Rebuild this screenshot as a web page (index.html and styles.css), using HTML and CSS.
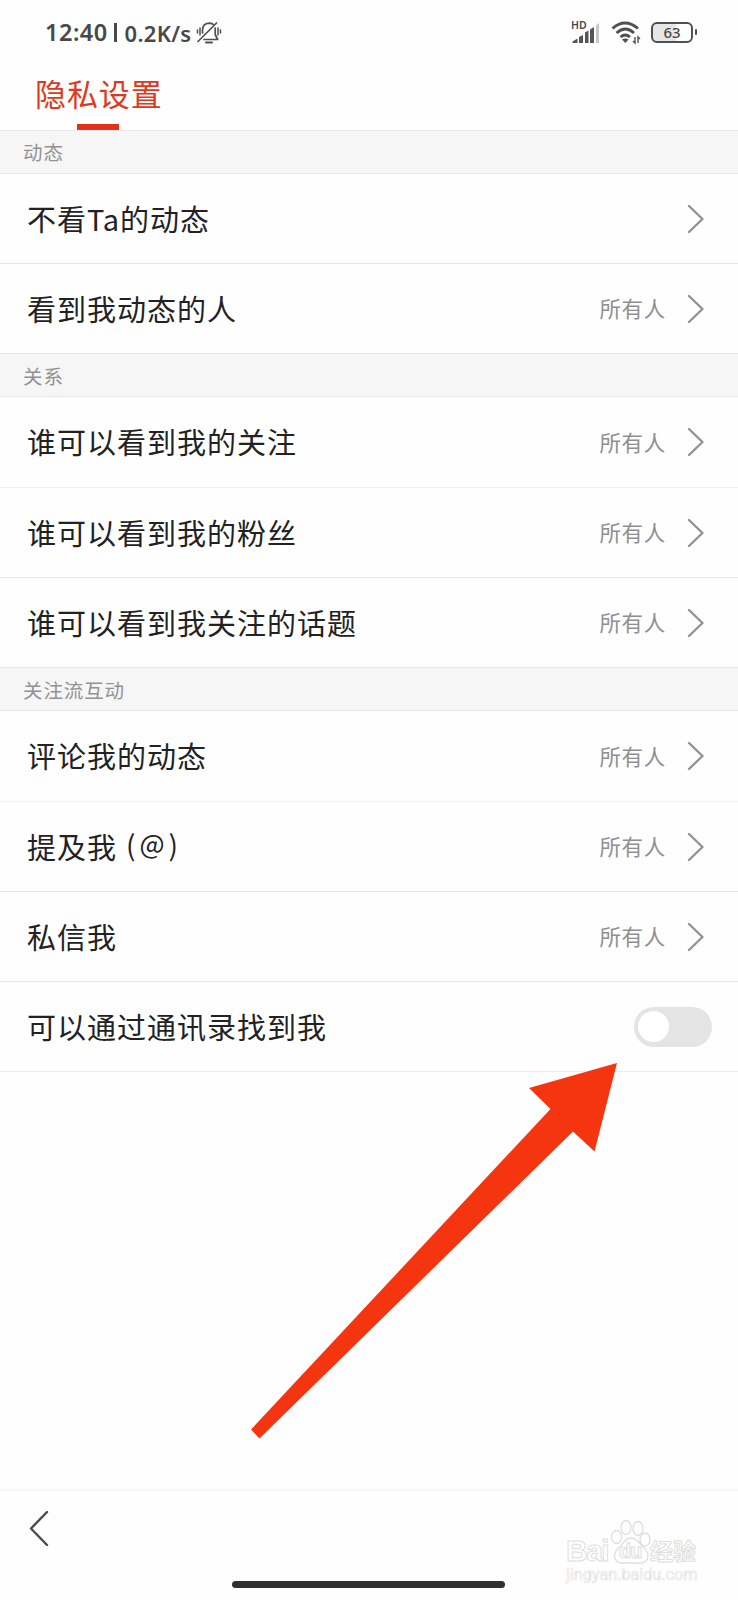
FILE: index.html
```html
<!DOCTYPE html>
<html lang="zh-CN">
<head>
<meta charset="utf-8">
<title>隐私设置</title>
<link rel="stylesheet" href="styles.css">
</head>
<body>
<svg class="defs" width="0" height="0"><symbol id="chevron" viewBox="0 0 18 30"><path d="M2 2 15.500 15 2 28" fill="none" stroke="#929292" stroke-width="2.400" stroke-linecap="round" stroke-linejoin="round"/></symbol></svg>
<div class="screen">
  <div class="status">
    <span class="clock">12:40</span><span class="divider"></span><span class="speed">0.2K/s</span>
    <svg class="bell" width="26" height="24" viewBox="0 0 26 24" fill="none" stroke="#505050" stroke-width="1.700" stroke-linecap="round" stroke-linejoin="round">
      <path d="M2 20.500 20.500 2M6.500 12V9.500C6.500 5 9 2.500 13 2.200c1.500 0 2.800.4 4 1.100M19.200 7v6.500l2.500 5H8"/><path d="M10 21.500h6" stroke-width="2"/><path d="M4 7v7M1.500 9v3M22 7v7M24.500 9v3" stroke-width="1.500"/>
    </svg>
    <div class="indicators">
      <div class="cell"><span class="hd">HD</span>
        <svg width="30" height="24" viewBox="0 0 30 24"><path d="M1.500 22v-1.500l5-3v4.500zM8 22v-6l4-2v8zM14 22V11.500l3.500-2V22zM19 22V8.500L23 6v16z" fill="#555"/><path d="M25 22V4.500L28 2v20z" fill="#c6c6c6"/></svg>
      </div>
      <svg class="wifi" width="32" height="26" viewBox="0 0 32 26" fill="none" stroke="#505050" stroke-width="2.800"><path d="M2.500 8.500Q15 -2.500 28 8.500M6.500 13q9-8 17.500 0M10.500 17q4.700-4 9.500 0"/><path d="m12 19.500 3.300 3.500 3.300-3.500q-3.300-2-6.600 0z" fill="#505050" stroke="none"/><path d="M25 17v6l-2-2M28 23v-6l2 2" stroke-width="1.400"/></svg>
      <div class="battery"><span>63</span></div>
    </div>
  </div>
  <header class="header"><h1 class="title">隐私设置</h1></header>
  <main>
    <h2 class="section raised">动态</h2>
    <div class="row"><span class="label">不看<span class="latin">Ta</span>的动态</span><svg class="chev"><use href="#chevron"/></svg></div>
    <div class="row"><span class="label">看到我动态的人</span><span class="value">所有人</span><svg class="chev"><use href="#chevron"/></svg></div>
    <h2 class="section">关系</h2>
    <div class="row first"><span class="label">谁可以看到我的关注</span><span class="value">所有人</span><svg class="chev"><use href="#chevron"/></svg></div>
    <div class="row"><span class="label">谁可以看到我的粉丝</span><span class="value">所有人</span><svg class="chev"><use href="#chevron"/></svg></div>
    <div class="row"><span class="label">谁可以看到我关注的话题</span><span class="value">所有人</span><svg class="chev"><use href="#chevron"/></svg></div>
    <h2 class="section">关注流互动</h2>
    <div class="row first"><span class="label">评论我的动态</span><span class="value">所有人</span><svg class="chev"><use href="#chevron"/></svg></div>
    <div class="row"><span class="label">提及我<span class="mention"><span>(</span><span class="at">@</span><span>)</span></span></span><span class="value">所有人</span><svg class="chev"><use href="#chevron"/></svg></div>
    <div class="row"><span class="label">私信我</span><span class="value">所有人</span><svg class="chev"><use href="#chevron"/></svg></div>
    <div class="row last"><span class="label">可以通过通讯录找到我</span><span class="switch"></span></div>
  </main>
  <footer class="footer">
    <svg class="back" width="22" height="40" viewBox="0 0 22 40"><path d="M19 4 3 20.500l16 16.500" fill="none" stroke="#4a4a4a" stroke-width="2.400" stroke-linecap="round" stroke-linejoin="round"/></svg>
    <div class="home"></div>
  </footer>
  <svg class="arrow" width="370" height="378" viewBox="249 1062 370 378"><path d="M617 1063 594.500 1151.500 573 1131.500 259.500 1438.500 251 1429.500 550.500 1109 529 1088z" fill="#f5350f"/></svg>
  <div class="mark">
    <span class="bai">Bai</span>
    <svg class="paw" width="42" height="46" viewBox="0 0 42 46" fill="#fff" stroke="#dedede" stroke-width="1.300"><ellipse cx="6.500" cy="18" rx="5" ry="6.500"/><ellipse cx="16" cy="8.500" rx="5" ry="7"/><ellipse cx="28" cy="9.500" rx="5" ry="7"/><ellipse cx="35" cy="20.500" rx="5" ry="6.500"/><path d="M20.500 19c-4 0-6 3-8.500 6.500S4.500 31 4.500 36.500 8 44 13 44h17c5 0 8-3 8-7.500 0-5-4-7.500-7-11S25 19 20.500 19z"/></svg>
    <span class="du">du</span><span class="jy">经验</span><span class="url">jingyan.baidu.com</span>
  </div>
</div>
</body>
</html>
```

FILE: styles.css
```css
* { box-sizing: border-box; }
body { margin: 0; background: #fff; font-family: "Noto Sans CJK SC", sans-serif; color: #222; }
.defs { position: absolute; }
.screen { position: relative; width: 738px; height: 1600px; display: flex; flex-direction: column; background: #fefefe; overflow: hidden; }
.status { height: 65px; flex: none; display: flex; align-items: center; padding: 0 41px 0 45px; color: #484848; font-family: "Noto Sans", sans-serif; font-weight: 600; line-height: 1; }
.clock { width: 69px; font-size: 23.5px; letter-spacing: 0.5px; }
.divider { width: 2.5px; height: 19px; background: #484848; margin-right: 8px; }
.speed { width: 71px; font-size: 22px; font-weight: 600; letter-spacing: 0.3px; white-space: nowrap; }
.bell { flex: none; }
.indicators { margin-left: auto; display: flex; align-items: center; }
.cell { position: relative; width: 30px; height: 24px; margin-right: 9px; left: 1px; }
.hd { position: absolute; left: 0; top: -1px; font: 600 10.5px/10px "Noto Sans", sans-serif; }
.wifi { margin-right: 10px; position: relative; left: 1px; }
.battery { position: relative; width: 42px; height: 21px; border: 2.5px solid #505050; border-radius: 6px; display: flex; align-items: center; justify-content: center; font: 500 15px/1 "Noto Sans", sans-serif; margin-right: 4px; background: linear-gradient(90deg, #e6e6e6 60%, #fff 60%); }
.battery::after { content: ""; position: absolute; right: -6px; top: 5px; width: 2.5px; height: 6px; border-radius: 1px; background: #505050; }
.header { position: relative; height: 66px; flex: none; padding-left: 35px; border-bottom: 1px solid #e8e8e8; }
.header::after { content: ""; position: absolute; left: 77px; bottom: 0; width: 42px; height: 6px; background: #e2321a; }
.title { margin: 0; color: #dc3a20; font-weight: 400; font-size: 31px; letter-spacing: 0.9px; line-height: 56px; }
.section { margin: 0; height: 43px; background: #f6f6f6; border-bottom: 1px solid #e8e8e8; padding-left: 23px; font-size: 19.5px; letter-spacing: 0.9px; font-weight: 400; line-height: 43px; color: #929292; }
.section.raised { line-height: 41px; }
.row { height: 90px; display: flex; align-items: center; border-bottom: 1px solid #e6e6e6; padding: 0 33px 0 27px; }
.row.first { height: 91px; border-color: #f0f0f0; }
.row.last { border-color: #ececec; }
.label { flex: 1; display: flex; align-items: center; font-size: 29px; letter-spacing: 1px; line-height: 44px; padding-bottom: 2px; }
.latin { letter-spacing: 0.8px; }
.mention { display: flex; margin: -3px 0 0 9px; font-size: 28px; }
.at { font-size: 26.5px; margin: 0 3px; position: relative; top: -1px; }
.value { color: #8f8f8f; font-size: 21.5px; letter-spacing: 0.7px; margin-right: 21px; padding-bottom: 2px; }
.chev { width: 18px; height: 30px; }
.switch { width: 78px; height: 40px; border-radius: 20px; background: #e4e4e4; padding: 4.5px 4px; margin-right: -6.5px; }
.switch::before { content: ""; display: block; width: 31px; height: 31px; border-radius: 50%; background: #fff; }
.footer { position: relative; height: 111px; margin-top: auto; border-top: 2px solid #f6f6f6; padding: 17px 0 0 28px; }
.home { position: absolute; left: 232px; bottom: 12px; width: 273px; height: 7px; border-radius: 4px; background: #303030; }
.arrow { position: absolute; left: 249px; top: 1062px; }
.mark { position: absolute; left: 566px; top: 1519px; width: 132px; height: 68px; color: #fff; -webkit-text-stroke: 1px #dedede; }
.mark > * { position: absolute; line-height: 1; white-space: nowrap; }
.bai { left: 0; top: 18px; font: 700 30px/28px "Liberation Sans", sans-serif; letter-spacing: -1.5px; }
.paw { left: 44px; top: 0; }
.du { left: 53px; top: 22px; font: 700 20px/1 "Liberation Sans", sans-serif; letter-spacing: -1px; }
.jy { left: 84px; top: 20px; font-size: 23px; font-weight: 700; }
.url { left: 0; top: 48px; font: 400 16.2px/1 Roboto, sans-serif; -webkit-text-stroke: 0.6px #e2e2e2; }
```
